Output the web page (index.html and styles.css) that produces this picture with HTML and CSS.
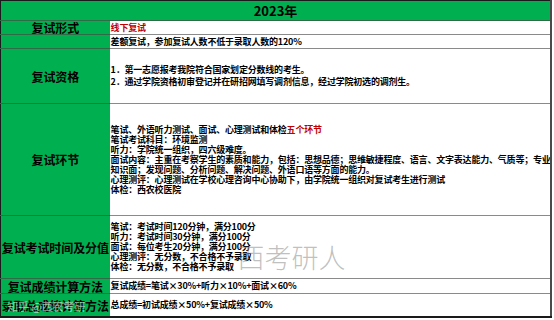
FILE: index.html
```html
<!DOCTYPE html>
<html lang="zh">
<head>
<meta charset="utf-8">
<link rel="stylesheet" href="styles.css">
</head>
<body>
<div class="page">
<table class="sheet">
  <colgroup><col class="c-label"><col class="c-body"></colgroup>
  <tr class="r-head"><td colspan="2" class="head">2023年</td></tr>
  <tr class="r1"><td class="label">复试形式</td><td class="body red">线下复试</td></tr>
  <tr class="r2"><td class="label"></td><td class="body">差额复试，参加复试人数不低于录取人数的120%</td></tr>
  <tr class="r3"><td class="label">复试资格</td><td class="body loose">
    <div>1．第一志愿报考我院符合国家划定分数线的考生。</div>
    <div>2．通过学院资格初审登记并在研招网填写调剂信息，经过学院初选的调剂生。</div>
  </td></tr>
  <tr class="r4"><td class="label">复试环节</td><td class="body">
    <div>笔试、外语听力测试、面试、心理测试和体检<span class="red">五个环节</span></div>
    <div>笔试考试科目：环境监测</div>
    <div>听力：学院统一组织，四六级难度。</div>
    <div>面试内容：主重在考察学生的素质和能力，包括：思想品德；思维敏捷程度、语言、文字表达能力、气质等；专业</div>
    <div>知识面；发现问题、分析问题、解决问题、外语口语等方面的能力。</div>
    <div>心理测评：心理测试在学校心理咨询中心协助下，由学院统一组织对复试考生进行测试</div>
    <div>体检：西农校医院</div>
  </td></tr>
  <tr class="r5"><td class="label">复试考试时间及分值</td><td class="body wm-cell">
    <div>笔试：考试时间120分钟，满分100分</div>
    <div>听力：考试时间30分钟，满分100分</div>
    <div>面试：每位考生20分钟，满分100分</div>
    <div>心理测评：无分数，不合格不予录取</div>
    <div>体检：无分数，不合格不予录取</div>
    <span class="wm">西考研人</span>
  </td></tr>
  <tr class="r6"><td class="label">复试成绩计算方法</td><td class="body">复试成绩=笔试×30%+听力×10%+面试×60%</td></tr>
  <tr class="r7"><td class="label wm2-cell">录取总成绩计算方法<span class="wm2">知乎 @西农考研</span></td><td class="body">总成绩=初试成绩×50%+复试成绩×50%</td></tr>
</table>
</div>
</body>
</html>
```
FILE: styles.css
```css
html, body {
  margin: 0;
  padding: 0;
  background: #ffffff;
}
.page {
  width: 554px;
  height: 320px;
  overflow: hidden;
  background: #ffffff;
}
.sheet {
  border-collapse: collapse;
  table-layout: fixed;
  width: 552px;
  font-family: "Noto Sans CJK SC", "Microsoft YaHei", sans-serif;
  font-weight: bold;
  color: #000;
  border-top: 1px solid #1a1a1a;
  border-left: 1px solid #1a1a1a;
  border-right: 2px solid #4a4a4a;
  border-bottom: 2px solid #1a1a1a;
}
.c-label { width: 109px; }
.c-body { width: 441px; }
td {
  padding: 0;
  overflow: hidden;
  white-space: nowrap;
}
.head {
  background: #00b050;
  text-align: center;
  font-size: 13px;
  line-height: 14px;
  height: 19px;
  border-bottom: 1px solid #2f6b44;
}
.label {
  background: #00b050;
  text-align: center;
  font-size: 12px;
  line-height: 13px;
  letter-spacing: -0.1px;
  border-bottom: 1px solid #2f6b44;
  vertical-align: middle;
}
.body {
  font-size: 9px;
  line-height: 10px;
  letter-spacing: -0.2px;
  padding-left: 1px;
  border-bottom: 1px solid #8a8a8a;
  vertical-align: middle;
}
.red { color: #c00000; }
.loose { line-height: 12px; }
.r1 td { height: 13px; }
.r2 td { height: 13px; }
.r3 td { height: 54px; }
.r4 td { height: 111px; }
.r5 td { height: 62px; }
.r6 td { height: 14px; }
.r7 td { height: 22px; border-bottom: none; }
.wm-cell, .wm2-cell { position: relative; }
.wm {
  position: absolute;
  left: 128px;
  top: 26px;
  font-family: "Noto Sans CJK SC", sans-serif;
  font-weight: 300;
  font-size: 27px;
  line-height: 30px;
  letter-spacing: 0;
  color: rgba(150, 150, 150, 0.6);
}
.wm2 {
  position: absolute;
  left: 6px;
  top: 6px;
  font-size: 11px;
  line-height: 12px;
  font-weight: normal;
  color: rgba(255, 255, 255, 0.6);
}
```
